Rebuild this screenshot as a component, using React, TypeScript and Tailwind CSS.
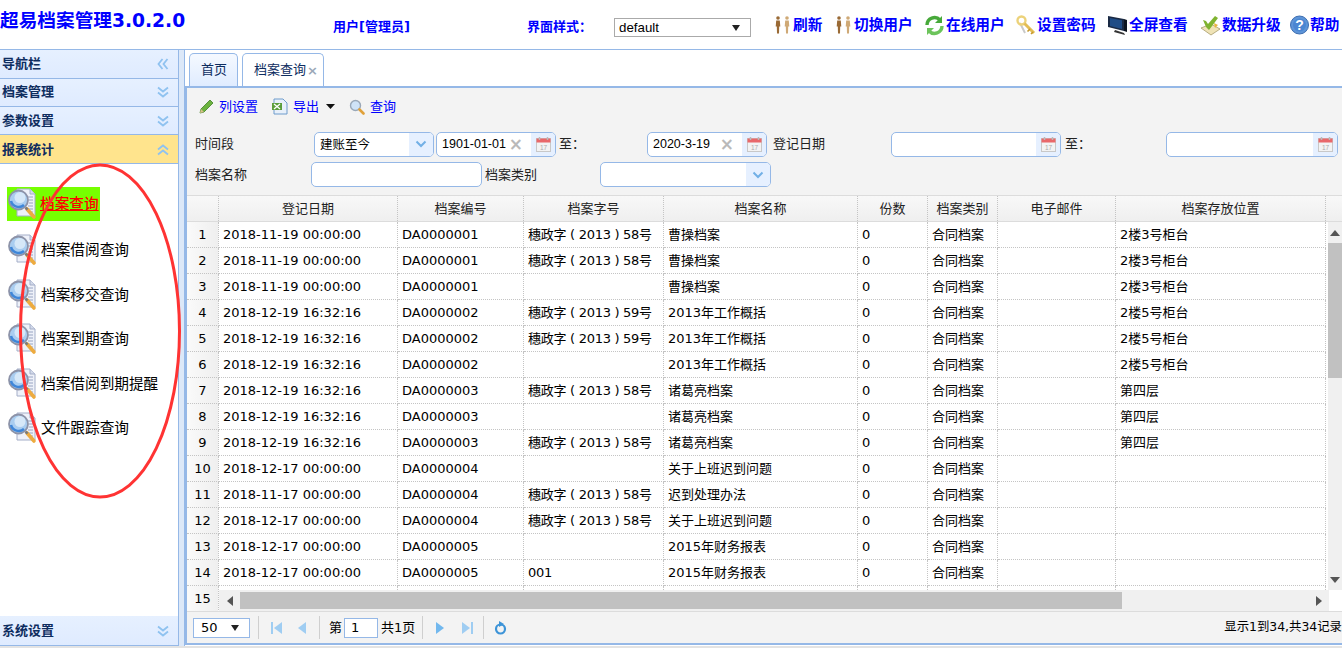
import React from "react";

const FONT = "font-['DejaVu_Sans','Noto_Sans_CJK_SC',sans-serif]";
const ARIAL = "font-['Liberation_Sans','Noto_Sans_CJK_SC',sans-serif]";

const Z58 = "穗政字 ( 2013 ) 58号";
const Z59 = "穗政字 ( 2013 ) 59号";
const T1 = "2018-11-19 00:00:00";
const T2 = "2018-12-19 16:32:16";
const T3 = "2018-12-17 00:00:00";
const rows: string[][] = [
  [T1, "DA0000001", Z58, "曹操档案", "0", "合同档案", "", "2楼3号柜台"],
  [T1, "DA0000001", Z58, "曹操档案", "0", "合同档案", "", "2楼3号柜台"],
  [T1, "DA0000001", "", "曹操档案", "0", "合同档案", "", "2楼3号柜台"],
  [T2, "DA0000002", Z59, "2013年工作概括", "0", "合同档案", "", "2楼5号柜台"],
  [T2, "DA0000002", Z59, "2013年工作概括", "0", "合同档案", "", "2楼5号柜台"],
  [T2, "DA0000002", "", "2013年工作概括", "0", "合同档案", "", "2楼5号柜台"],
  [T2, "DA0000003", Z58, "诸葛亮档案", "0", "合同档案", "", "第四层"],
  [T2, "DA0000003", "", "诸葛亮档案", "0", "合同档案", "", "第四层"],
  [T2, "DA0000003", Z58, "诸葛亮档案", "0", "合同档案", "", "第四层"],
  [T3, "DA0000004", "", "关于上班迟到问题", "0", "合同档案", "", ""],
  ["2018-11-17 00:00:00", "DA0000004", Z58, "迟到处理办法", "0", "合同档案", "", ""],
  [T3, "DA0000004", Z58, "关于上班迟到问题", "0", "合同档案", "", ""],
  [T3, "DA0000005", "", "2015年财务报表", "0", "合同档案", "", ""],
  [T3, "DA0000005", "001", "2015年财务报表", "0", "合同档案", "", ""],
  ["", "", "", "", "", "", "", ""],
];
const heads = ["登记日期", "档案编号", "档案字号", "档案名称", "份数", "档案类别", "电子邮件", "档案存放位置"];

function Chevrons({ up, left }: { up?: boolean; left?: boolean }) {
  const r = left ? "rotate-90" : up ? "rotate-180" : "";
  return (
    <svg width="12" height="12" viewBox="0 0 12 12" className={r} fill="none" stroke="#8fc2f0" strokeWidth="1.8">
      <path d="M1 1.5 6 5.5 11 1.5" />
      <path d="M1 6.5 6 10.5 11 6.5" />
    </svg>
  );
}

function NavHead({ label, active, left, h }: { label: string; active?: boolean; left?: boolean; h: string }) {
  return (
    <div className={`flex items-center justify-between pl-[2px] pr-[9px] border-b border-[#95b8e7] text-[13px] font-bold text-[#0e2d5f] ${h} ${active ? "bg-[#ffe48d]" : "bg-gradient-to-b from-[#e6f0ff] to-[#dfebff]"}`}>
      <span>{label}</span>
      <Chevrons up={active} left={left} />
    </div>
  );
}

function DocSearch() {
  return (
    <svg width="30" height="32" viewBox="0 0 30 32" className="shrink-0">
      <path d="M10 1h13l5 5v22H10z" fill="#eef1f9" stroke="#a4aec8" />
      <path d="M23 1v5h5" fill="#d3daea" stroke="#a4aec8" />
      <path d="M21 9h5M22 12h4M22 15h4M21 18h5M22 21h4M22 24h4" stroke="#98a4c2" />
      <circle cx="11.500" cy="12" r="9.500" fill="#a9cdf0" stroke="#8d93a8" strokeWidth="1.800" />
      <circle cx="13" cy="9.500" r="5.500" fill="#d6e8f8" />
      <path d="M4 13a8 8 0 0 0 13 4" stroke="#3f86d8" strokeWidth="2.600" fill="none" />
      <path d="M20 21l7 8" stroke="#edab3f" strokeWidth="3.600" strokeLinecap="round" />
      <path d="M18.500 19.500l2 2.200" stroke="#7b7b7b" strokeWidth="2.600" />
    </svg>
  );
}

function People() {
  return (
    <svg width="19" height="20" viewBox="0 0 19 20" className="shrink-0">
      <g fill="#9a6a35">
        <circle cx="5" cy="3" r="1.800" />
        <path d="M3.200 5.500h3.600l.5 6H6.200L6 18.500H4l-.2-7H2.700z" />
      </g>
      <g fill="#cfa976">
        <circle cx="14" cy="3" r="1.800" />
        <path d="M12.200 5.500h3.600l.5 6h-1.100l-.2 7h-2l-.2-7h-1.100z" />
      </g>
    </svg>
  );
}

function Reload() {
  return (
    <svg width="21" height="21" viewBox="0 0 21 21" className="shrink-0" fill="none">
      <path d="M3 10a7.5 7.5 0 0 1 13-5" stroke="#47a93a" strokeWidth="3.4" />
      <path d="M18 1v7h-7z" fill="#47a93a" />
      <path d="M18 11a7.5 7.5 0 0 1-13 5" stroke="#6cc45b" strokeWidth="3.4" />
      <path d="M3 20v-7h7z" fill="#6cc45b" />
    </svg>
  );
}

function KeyIcon() {
  return (
    <svg width="20" height="21" viewBox="0 0 20 21" className="shrink-0" fill="none">
      <path d="M4 8l5 10" stroke="#c9c9c9" strokeWidth="2" />
      <circle cx="5.500" cy="5.500" r="4" stroke="#ecd27a" strokeWidth="2.400" />
      <path d="M8.500 8.500 18 18" stroke="#e3bd55" strokeWidth="3" />
      <path d="M14 14l-2.500 2.500M17 17l-2 2" stroke="#c79a2e" strokeWidth="1.600" />
    </svg>
  );
}

function Monitor() {
  return (
    <svg width="20" height="20" viewBox="0 0 20 20" className="shrink-0">
      <path d="M0 1 16 4v12L0 12z" fill="#1a2a44" />
      <path d="M2 3 14 5.300v8.800L2 11z" fill="#1f4c86" />
      <path d="M16 4l3 1v12l-3-1z" fill="#0c1420" />
      <path d="M7 15l9 3 1 2-11-3z" fill="#333" />
    </svg>
  );
}

function Upgrade() {
  return (
    <svg width="21" height="21" viewBox="0 0 21 21" className="shrink-0">
      <path d="M1 13 11 9l9 5-9 6z" fill="#efe3b6" stroke="#a79a6a" strokeWidth=".8" />
      <path d="M6 12 3 5l3 1 2 3 7-8 3 2-9 12z" fill="#7fb32f" />
      <path d="M14 8l4 2-3 3z" fill="#e9b53a" />
    </svg>
  );
}

function Help() {
  return (
    <svg width="19" height="20" viewBox="0 0 19 20" className="shrink-0">
      <circle cx="9.500" cy="10" r="9" fill="#5d94d8" stroke="#3a6cb0" />
      <circle cx="9.500" cy="10" r="6.500" fill="#4a86d2" />
      <text x="9.500" y="15" textAnchor="middle" fontSize="14" fontWeight="700" fill="#fff" fontFamily="Liberation Sans">?</text>
    </svg>
  );
}

function Pencil() {
  return (
    <svg width="15" height="15" viewBox="0 0 15 15" className="shrink-0">
      <path d="M1 14l1-4L11 1l3 3-9 9z" fill="#6cb33f" stroke="#3f7f25" strokeWidth=".8" />
      <path d="M1 14l1-4 3 3z" fill="#d9c08a" />
    </svg>
  );
}

function Excel() {
  return (
    <svg width="16" height="17" viewBox="0 0 16 17" className="shrink-0">
      <path d="M2 1h9l4 4v11H2z" fill="#e8f0fa" stroke="#6f9ccc" />
      <path d="M0 5h10v7H0z" fill="#5b9e3b" />
      <path d="M2 6l6 5M8 6l-6 5" stroke="#fff" strokeWidth="1.300" />
    </svg>
  );
}

function Search() {
  return (
    <svg width="16" height="16" viewBox="0 0 16 16" className="shrink-0" fill="none">
      <circle cx="6.500" cy="6.500" r="5" fill="#cfe3f7" stroke="#9aa8b8" strokeWidth="1.400" />
      <path d="M10.500 10.500l4 4" stroke="#e0a13a" strokeWidth="2.600" strokeLinecap="round" />
    </svg>
  );
}

function Calendar() {
  return (
    <svg width="15" height="15" viewBox="0 0 15 15" className="shrink-0">
      <rect x=".5" y="1.500" width="14" height="13" fill="#f3f3f3" stroke="#c8c8c8" />
      <rect x=".5" y="1.500" width="14" height="4" fill="#e9686a" />
      <path d="M3.500 0v3M11.500 0v3" stroke="#bbb" strokeWidth="1.500" />
      <text x="7.500" y="12.500" textAnchor="middle" fontSize="6.500" fill="#aaa" fontFamily="Liberation Sans">17</text>
    </svg>
  );
}

function Caret() {
  return (
    <svg width="12" height="8" viewBox="0 0 12 8" fill="none" stroke="#72b0e6" strokeWidth="2">
      <path d="M1.500 1.500 6 6l4.500-4.500" />
    </svg>
  );
}

function Combo({ w, text, ml = "" }: { w: string; text?: string; ml?: string }) {
  return (
    <div className={`flex h-[25px] ${w} ${ml} shrink-0 overflow-hidden rounded-[5px] border border-[#95b8e7] bg-white`}>
      <span className="flex-1 pl-[5px] text-[12.500px] leading-[23px] text-black">{text}</span>
      <span className="flex w-[24px] items-center justify-center bg-[#e6f0ff]"><Caret /></span>
    </div>
  );
}

function DateBox({ w, text, ml = "" }: { w: string; text?: string; ml?: string }) {
  return (
    <div className={`flex h-[25px] ${w} ${ml} shrink-0 overflow-hidden rounded-[5px] border border-[#95b8e7] bg-white`}>
      <span className={`flex-1 pl-[5px] text-[12.500px] leading-[23px] text-black ${ARIAL}`}>{text}</span>
      {text ? <span className="mr-[8px] flex items-center text-[17px] font-bold leading-none text-[#b9b9b9]">×</span> : null}
      <span className="flex w-[24px] items-center justify-center bg-[#e6f0ff]"><Calendar /></span>
    </div>
  );
}

function Tool({ icon, label }: { icon: React.ReactNode; label: string }) {
  return <span className="flex h-[20px] items-center gap-[5px] text-[#0000ff]">{icon}<span>{label}</span></span>;
}

function Action({ icon, label, w }: { icon: React.ReactNode; label: string; w: string }) {
  return (
    <div className={`flex ${w} shrink-0 items-center gap-[1px]`}>
      {icon}
      <span className="whitespace-nowrap text-[14.670px] font-bold text-[#0000ff]">{label}</span>
    </div>
  );
}

function PageSep() {
  return <span className="block h-[23px] w-px bg-[#cfcfcf]" />;
}

function Tri({ dir, color }: { dir: "l" | "r" | "u" | "d"; color: string }) {
  const d = { l: "M7 0v10L1 5z", r: "M1 0v10l6-5z", u: "M0 7h10L5 1z", d: "M0 1h10L5 7z" }[dir];
  return <svg width={dir === "l" || dir === "r" ? 8 : 10} height={dir === "l" || dir === "r" ? 10 : 8} viewBox={dir === "l" || dir === "r" ? "0 0 8 10" : "0 0 10 8"}><path d={d} fill={color} /></svg>;
}

function PageTri({ dir, color }: { dir: "l" | "r"; color: string }) {
  return (
    <svg width="8" height="12" viewBox="0 0 8 12"><path d={dir === "l" ? "M8 0v12L0 6z" : "M0 0v12l8-6z"} fill={color} /></svg>
  );
}

const cols = ["w-[179px]", "w-[126px]", "w-[140px]", "w-[194px]", "w-[70px]", "w-[70px]", "w-[118px]", "w-[210px]"];

export default function App() {
  return (
    <div className={`relative h-[648px] w-[1342px] overflow-hidden bg-white ${FONT}`}>
      <header className="flex h-[50px] items-start border-b border-[#95b8e7]">
        <h1 className="w-[333px] shrink-0 whitespace-nowrap pt-[9px] text-[18.670px] font-bold leading-[24px] text-[#0000ff]">超易档案管理3.0.2.0</h1>
        <div className="w-[194px] shrink-0 pt-[18px] text-[13px] font-bold leading-[18px] text-[#0000ff]">用户[管理员]</div>
        <div className="w-[87px] shrink-0 pt-[18px] text-[13px] font-bold leading-[18px] text-[#0000ff]">界面样式：</div>
        <div className={`mt-[18px] flex h-[19px] w-[137px] shrink-0 items-center justify-between border border-[#aaa] pl-[4px] pr-[10px] text-[13.300px] text-black ${ARIAL}`}>
          <span>default</span>
          <svg width="8" height="6" viewBox="0 0 8 6"><path d="M0 0h8L4 6z" fill="#222" /></svg>
        </div>
        <div className="ml-[22px] flex h-[50px] items-start pt-[14px]">
          <Action w="w-[61px]" icon={<People />} label="刷新" />
          <Action w="w-[90px]" icon={<People />} label="切换用户" />
          <Action w="w-[92px]" icon={<Reload />} label="在线用户" />
          <Action w="w-[92px]" icon={<KeyIcon />} label="设置密码" />
          <Action w="w-[92px]" icon={<Monitor />} label="全屏查看" />
          <Action w="w-[90px]" icon={<Upgrade />} label="数据升级" />
          <Action w="w-[52px]" icon={<Help />} label="帮助" />
        </div>
      </header>

      <div className="flex h-[596px]">
        <aside className="flex w-[178px] shrink-0 flex-col">
          <NavHead label="导航栏" left h="h-[29px]" />
          <NavHead label="档案管理" h="h-[28px] pb-[1px]" />
          <NavHead label="参数设置" h="h-[28px]" />
          <NavHead label="报表统计" active h="h-[29px] pt-[1px]" />
          <ul className="flex-1 pl-[7px] pt-[23px] text-[14.670px] text-black">
            <li className="mb-[13px] flex h-[34px] w-[93px] items-center bg-[#76ff00]">
              <DocSearch />
              <span className="ml-[3px] whitespace-nowrap pb-[1px] font-medium text-[#ff0000] underline">档案查询</span>
            </li>
            {["档案借阅查询", "档案移交查询", "档案到期查询", "档案借阅到期提醒", "文件跟踪查询"].map((t) => (
              <li key={t} className="mb-[12.500px] flex h-[32px] items-center">
                <DocSearch />
                <span className="ml-[4px] whitespace-nowrap">{t}</span>
              </li>
            ))}
          </ul>
          <NavHead label="系统设置" h="h-[30px]" />
        </aside>

        <div className="w-[7px] shrink-0 border-x border-[#95b8e7] bg-[#dce8f8]" />

        <main className="mb-[1px] flex min-w-0 flex-1 flex-col border-b-2 border-[#95b8e7]">
          <div className="flex h-[36px] shrink-0 items-end gap-[4px] pl-[4px] text-[13px] text-[#0e2d5f]">
            <div className="flex h-[33px] w-[49px] items-center justify-center rounded-t-[5px] border border-b-0 border-[#95b8e7] bg-gradient-to-b from-[#f5f9ff] to-[#e0ecff] pl-[1px]">首页</div>
            <div className="flex h-[33px] w-[82px] items-center gap-[1px] rounded-t-[5px] border border-b-0 border-[#95b8e7] bg-white pl-[11px]">
              <span>档案查询</span>
              <span className="text-[13px] font-bold leading-none text-[#9aa8b8]">×</span>
            </div>
          </div>

          <div className="flex min-h-0 flex-1 flex-col border-l-2 border-t-2 border-[#95b8e7] bg-[#f3f3f3] text-[13px] text-[#222]">
            <div className="flex h-[36px] items-center gap-[14px] pl-[12px] pt-[1px] text-[13px]">
              <Tool icon={<Pencil />} label="列设置" />
              <span className="flex items-center gap-[7px]">
                <Tool icon={<Excel />} label="导出" />
                <svg width="9" height="5" viewBox="0 0 9 5"><path d="M0 0h9L4.500 5z" fill="#111" /></svg>
              </span>
              <Tool icon={<Search />} label="查询" />
            </div>
            <div className="mt-[7px] flex h-[26px] items-center pl-[8px]">
              <span className="w-[119px] shrink-0">时间段</span>
              <Combo w="w-[120px]" text="建账至今" />
              <DateBox w="w-[120px]" ml="ml-[2px]" text="1901-01-01" />
              <span className="ml-[3px] w-[88px] shrink-0">至：</span>
              <DateBox w="w-[120px]" text="2020-3-19" />
              <span className="ml-[6px] w-[118px] shrink-0">登记日期</span>
              <DateBox w="w-[170px]" />
              <span className="ml-[4px] w-[101px] shrink-0">至：</span>
              <DateBox w="w-[172px]" />
            </div>
            <div className="mt-[5px] flex h-[25px] items-center pl-[8px]">
              <span className="w-[116px] shrink-0">档案名称</span>
              <div className="h-[25px] w-[171px] shrink-0 rounded-[5px] border border-[#95b8e7] bg-white" />
              <span className="ml-[3px] w-[115px] shrink-0">档案类别</span>
              <Combo w="w-[171px]" />
            </div>

            <div className="mt-[8px] flex h-[27px] shrink-0 border-y border-[#dcdcdc] bg-gradient-to-b from-[#f8f8f8] to-[#efefef] text-center">
              <div className="w-[32px] shrink-0 border-r border-dotted border-[#c4c4c4]" />
              {heads.map((h, i) => (
                <div key={h} className={`${cols[i]} shrink-0 border-r border-dotted border-[#c4c4c4] leading-[25px]`}>{h}</div>
              ))}
            </div>

            <div className="flex min-h-0 flex-1">
              <div className="w-[32px] shrink-0 overflow-hidden">
                {rows.map((_, i) => (
                  <div key={i} className="h-[26px] border-b border-r border-dotted border-[#c4c4c4] bg-gradient-to-r from-[#fafafa] to-[#efefef] text-center leading-[25px] text-black">{i + 1}</div>
                ))}
              </div>
              <div className="flex min-w-0 flex-1 flex-col bg-white">
                <div className="flex h-[368px] shrink-0">
                  <div className="min-w-0 flex-1 overflow-hidden">
                    <table className="w-[1107px] table-fixed border-separate border-spacing-0 text-black">
                      <colgroup>
                        {cols.map((c, i) => <col key={i} className={c} />)}
                      </colgroup>
                      <tbody>
                        {rows.map((r, i) => (
                          <tr key={i} className="h-[26px]">
                            {r.map((c, j) => (
                              <td key={j} className={`h-[26px] overflow-hidden whitespace-nowrap border-b border-r border-dotted border-[#c4c4c4] px-[4px] py-0 text-[13px] ${j === 2 ? "tracking-[-0.28px]" : ""}`}>{c}</td>
                            ))}
                          </tr>
                        ))}
                      </tbody>
                    </table>
                  </div>
                  <div className="flex w-[14px] shrink-0 flex-col items-center bg-[#f0f0f0]">
                    <div className="flex h-[21px] items-center"><Tri dir="u" color="#555" /></div>
                    <div className="h-[135px] w-full bg-[#c1c1c1]" />
                    <div className="flex-1" />
                    <div className="flex h-[21px] items-center"><Tri dir="d" color="#555" /></div>
                  </div>
                </div>
                <div className="flex h-[21px] shrink-0 items-center bg-white">
                  <div className="flex h-[21px] w-[1110px] items-center bg-[#f0f0f0]">
                    <span className="flex w-[21px] justify-center"><Tri dir="l" color="#555" /></span>
                    <div className="h-[17px] w-[882px] bg-[#c1c1c1]" />
                    <div className="flex-1" />
                    <span className="flex w-[21px] justify-center"><Tri dir="r" color="#555" /></span>
                  </div>
                </div>
              </div>
            </div>

            <div className="flex h-[32px] shrink-0 items-center border-t border-[#dcdcdc] pl-[6px] text-[13px] text-black">
              <div className="flex h-[20px] w-[57px] items-center justify-between border border-[#95b8e7] bg-white pl-[7px] pr-[10px]">
                <span>50</span>
                <svg width="8" height="6" viewBox="0 0 8 6"><path d="M0 0h8L4 6z" fill="#222" /></svg>
              </div>
              <span className="ml-[8px]"><PageSep /></span>
              <span className="ml-[12px] flex items-center gap-[1px]"><span className="h-[12px] w-[2px] bg-[#9fcdf2]" /><PageTri dir="l" color="#9fcdf2" /></span>
              <span className="ml-[16px]"><PageTri dir="l" color="#9fcdf2" /></span>
              <span className="ml-[13px]"><PageSep /></span>
              <span className="ml-[9px]">第</span>
              <div className="ml-[2px] h-[20px] w-[34px] border border-[#95b8e7] bg-white pl-[6px] leading-[18px]">1</div>
              <span className="ml-[3px]">共1页</span>
              <span className="ml-[7px]"><PageSep /></span>
              <span className="ml-[13px]"><PageTri dir="r" color="#72b8ee" /></span>
              <span className="ml-[18px] flex items-center gap-[1px]"><PageTri dir="r" color="#9fcdf2" /><span className="h-[12px] w-[2px] bg-[#9fcdf2]" /></span>
              <span className="ml-[10px]"><PageSep /></span>
              <svg className="ml-[10px]" width="13" height="14" viewBox="0 0 13 14" fill="none">
                <circle cx="6.500" cy="8" r="4.500" stroke="#3d94d8" strokeWidth="2.200" />
                <path d="M5 0l5 3-5 3z" fill="#3d94d8" />
              </svg>
              <span className="ml-auto whitespace-nowrap text-[12.400px]">显示1到34,共34记录</span>
            </div>
          </div>
        </main>
      </div>
      <div className="h-[2px] bg-[#e3e3e3]" />

      <svg className="pointer-events-none absolute left-[18px] top-[162px]" width="164" height="338" viewBox="0 0 164 338" fill="none">
        <ellipse cx="82" cy="169" rx="79.500" ry="166" stroke="#ff3333" strokeWidth="3" />
      </svg>
    </div>
  );
}
